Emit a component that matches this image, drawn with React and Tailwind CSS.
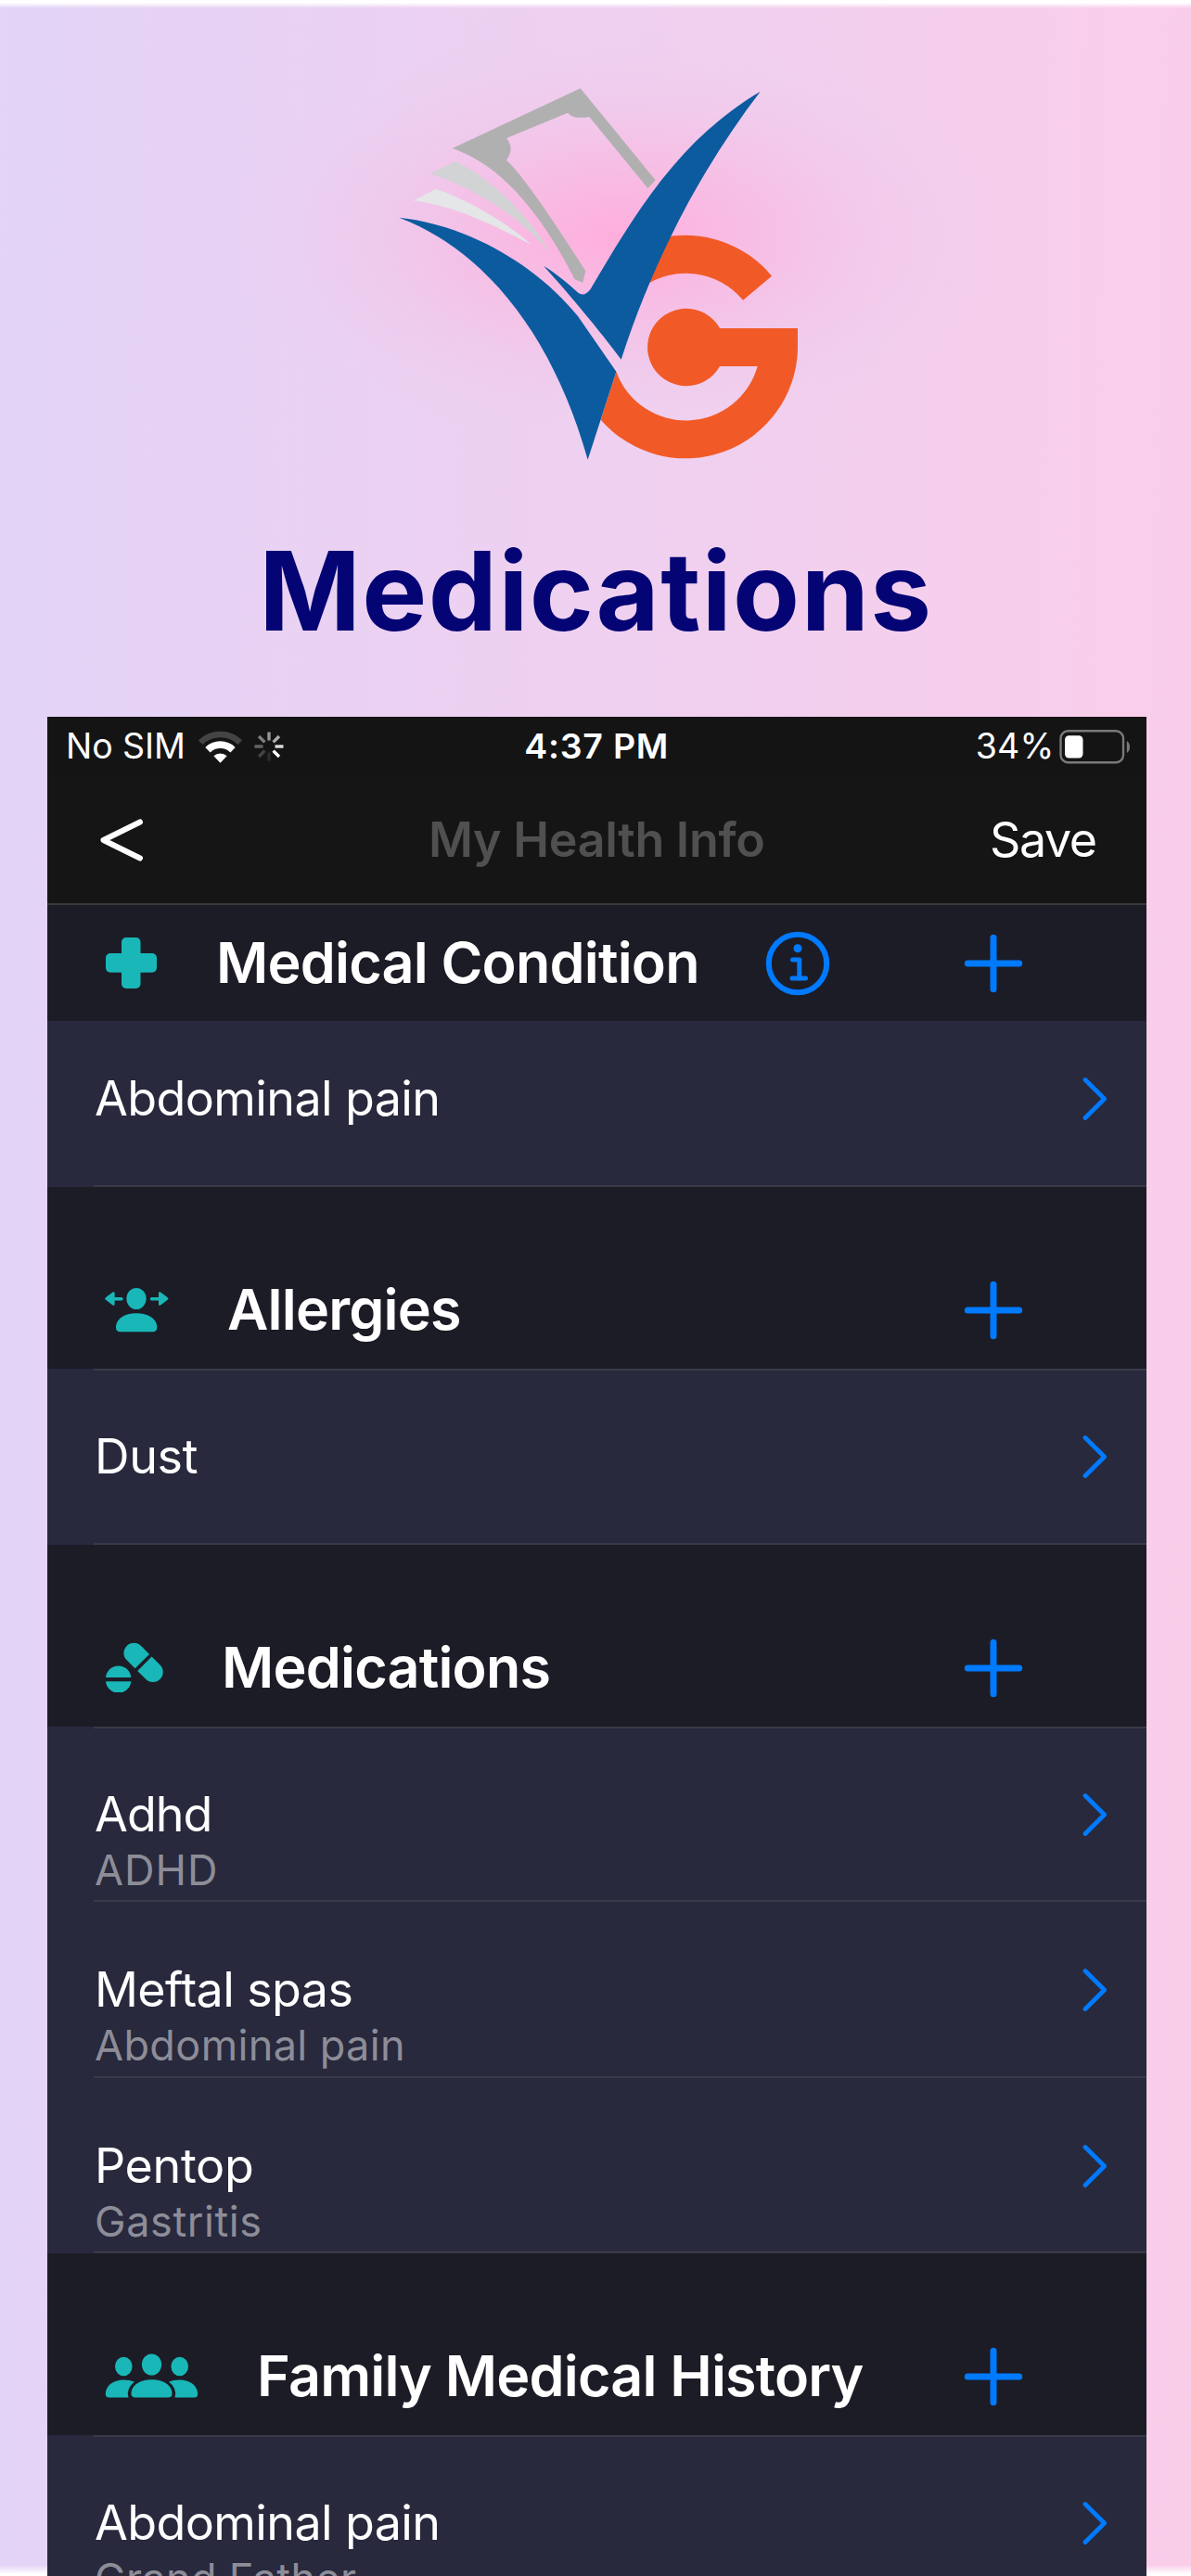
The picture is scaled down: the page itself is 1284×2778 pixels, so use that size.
import React from 'react';

const Logo = () => (
    <svg viewBox="0 0 1500 1350" className="ml-4 w-[500px] h-[450px] shrink-0">
        {/* Book cover and pages */}
        <path fill="#b0b0b0" d="M263 270 L677 76 L920 373 L895 399 L706 168 Q655 177 636 155 L438 237 Q466 272 437 308 Q495 355 694 667 L685 704 L659 694 C540 460 410 320 263 270Z" />
        <path fill="#d1d3d4" d="M191 352 L274 312 C400 375 520 500 578 607 C480 490 340 400 191 352Z" />
        <path fill="#e4e6e8" d="M137 439 L210 401 C320 440 440 510 519 582 C400 520 270 455 137 439Z" />
        {/* G */}
        <g fill="#f15a26">
            <path d="M940 559 A363 363 0 0 1 1296 683 L1203 761 A240 240 0 0 0 880 718Z" />
            <path d="M1128 852 H1380 V920 A363 363 0 0 1 743 1148 L793 992 A240 240 0 0 0 1250 975 H1128 A125 125 0 1 1 1128 852Z" />
        </g>
        {/* Check mark */}
        <g fill="#0c5b9f">
            <path d="M91 494 C300 515 530 640 669 813 L793 992 L701 1277 C590 880 371 600 91 494Z" />
            <path d="M558 650 C600 675 640 710 670 737 Q690 752 710 725 C860 470 1000 240 1259 86 C1080 320 920 610 809 953 C740 860 640 740 558 650Z" />
        </g>
    </svg>
);

const WifiIcon = () => (
    <svg viewBox="0 0 140 105" className="w-[47px] h-[35px]" fill="none">
        <path d="M6 38 A92 92 0 0 1 134 38" stroke="#444444" strokeWidth="20" />
        <path d="M29.4 62 A58.5 58.5 0 0 1 110.6 62" stroke="#ffffff" strokeWidth="23" />
        <path d="M70 104 L48.5 82 A31 31 0 0 1 91.5 82Z" fill="#ffffff" />
    </svg>
);

const spokes = [0.55, 0.65, 0.85, 1, 0.1, 0.2, 0.35, 0.45];

const Spinner = () => (
    <svg viewBox="-16 -16 32 32" className="w-8 h-8">
        {spokes.map((opacity, i) => (
            <path key={i} d="M0 -6.5V-15.5" stroke="#ffffff" strokeWidth="3.4" opacity={opacity} transform={`rotate(${i * 45})`} />
        ))}
    </svg>
);

const BatteryIcon = () => (
    <svg viewBox="0 0 76 37" className="w-[76px] h-[37px]" fill="none">
        <rect x="1.5" y="1.3" width="67.5" height="34" rx="8" stroke="#7a7a7a" strokeWidth="2.4" />
        <rect x="6" y="6.2" width="19.5" height="24.4" rx="4.5" fill="#ffffff" />
        <path d="M72.8 12 Q76 14 76 18.5 T72.8 25Z" fill="#7a7a7a" />
    </svg>
);

const ConditionIcon = () => (
    <svg viewBox="0 0 57 57" className="w-[57px] h-[57px]" fill="#19b7b7">
        <rect x="18" y="1" width="20.5" height="55" rx="5" />
        <rect x="1" y="18" width="55" height="20.7" rx="5" />
    </svg>
);

const AllergyIcon = () => (
    <svg viewBox="0 0 69 48" className="w-[69px] h-12" fill="#19b7b7">
        <ellipse cx="34" cy="11.5" rx="10.6" ry="11.5" />
        <path d="M12 42.5 C12 33 22 27.3 34 27.3 S56.3 33 56.3 42.5 Q56.3 47.3 51.5 47.3 H17 Q12 47.3 12 42.5Z" />
        <path d="M0 11.5 Q0 10.6 9 4.3 Q10.6 4 10.6 5.6 V10 H18 Q19.7 10 19.7 11.7 T18 13.4 H10.6 V17.6 Q10.6 19.2 9 18.8 Q0 12.4 0 11.5Z" />
        <path d="M68.6 11.5 Q68.6 10.6 59.6 4.3 Q58 4 58 5.6 V10 H50.5 Q48.8 10 48.8 11.7 T50.5 13.4 H58 V17.6 Q58 19.2 59.6 18.8 Q68.6 12.4 68.6 11.5Z" />
    </svg>
);

const PillsIcon = () => (
    <svg viewBox="0 0 63 54" className="-mt-[2px] w-[63px] h-[54px]" fill="#19b7b7">
        <path d="M1 38 A13.7 13.7 0 0 1 28.3 38Z" />
        <path d="M1 42.2 A13.7 13.7 0 0 0 28.3 42.2Z" />
        <g transform="translate(41.6 21.9) rotate(45)">
            <path d="M-1.8 -10.9 V10.9 H-14.5 A10.9 10.9 0 0 1 -14.5 -10.9Z" />
            <path d="M1.8 -10.9 V10.9 H14.5 A10.9 10.9 0 0 0 14.5 -10.9Z" />
        </g>
    </svg>
);

const FamilyIcon = () => (
    <svg viewBox="0 0 101 48" className="-mt-[2px] w-[101px] h-12" fill="#19b7b7">
        <ellipse cx="20.3" cy="14" rx="9.3" ry="10.3" />
        <ellipse cx="80.7" cy="14" rx="9.3" ry="10.3" />
        <ellipse cx="50.5" cy="12" rx="10.6" ry="11.6" />
        <path d="M28.5 43.5 C28.5 34 38.5 28.3 50.5 28.3 S72.5 34 72.5 43.5 Q72.5 47.6 68 47.6 H33 Q28.5 47.6 28.5 43.5Z" />
        <path d="M32 30.6 Q27 28.4 20.3 28.4 C9 28.4 .8 35 .8 43.5 Q.8 47.6 4.5 47.6 H25.5 Q22.5 38 32 30.6Z" />
        <path d="M69 30.6 Q74 28.4 80.7 28.4 C92 28.4 100.2 35 100.2 43.5 Q100.2 47.6 96.5 47.6 H75.5 Q78.5 38 69 30.6Z" />
    </svg>
);

const InfoIcon = () => (
    <svg viewBox="-35 -35 70 70" className="ml-[8px] w-[70px] h-[70px]" fill="none" stroke="#007aff" strokeLinecap="round" strokeLinejoin="round">
        <circle r="31.2" strokeWidth="6" />
        <circle cy="-16.3" r="4.5" fill="#007aff" stroke="none" />
        <path d="M-5.5 -4 H1.8 V16" strokeWidth="5" />
        <path d="M-6 16 H8.5" strokeWidth="5" />
    </svg>
);

const PlusIcon = () => (
    <svg viewBox="-32 -32 64 64" className="ml-auto mr-[133px] w-16 h-16" stroke="#007aff" strokeWidth="7" strokeLinecap="round">
        <path d="M-27.7 0H27.7M0 -27.7V27.7" />
    </svg>
);

const Chevron = () => (
    <svg viewBox="0 0 28 48" className="ml-auto mr-[41px] w-7 h-12" fill="none" stroke="#007aff" strokeWidth="4.8" strokeLinecap="round" strokeLinejoin="round">
        <path d="M3 3.5 L23.6 24 L3 44.5" />
    </svg>
);

const sections = [
    {
        title: 'Medical Condition',
        icon: ConditionIcon,
        info: true,
        header: 'h-[125px]',
        row: 'h-[179px] pt-[54px]',
        items: [{ name: 'Abdominal pain' }],
    },
    {
        title: 'Allergies',
        icon: AllergyIcon,
        items: [{ name: 'Dust', tracking: 'tracking-[-0.4px]' }],
    },
    {
        title: 'Medications',
        icon: PillsIcon,
        items: [
            { name: 'Adhd', tracking: 'tracking-[-1px]', detail: 'ADHD', detailTracking: 'tracking-[1px]' },
            { name: 'Meftal spas', detail: 'Abdominal pain' },
            { name: 'Pentop', tracking: 'tracking-[-0.35px]', detail: 'Gastritis', detailTracking: 'tracking-[0.6px]' },
        ],
    },
    {
        title: 'Family Medical History',
        icon: FamilyIcon,
        items: [{ name: 'Abdominal pain', detail: 'Grand Father' }],
    },
];

const Row = ({ item, size, divider }) => (
    <div className="bg-[#28293d] pl-[50px]">
        <div className={`border-b-2 border-[#393a47] pl-px ${size} ${divider}`}>
            <div className="flex items-center h-[60px]">
                <span className={`text-[52px] leading-[60px] text-white ${item.tracking || 'tracking-[-0.6px]'}`}>{item.name}</span>
                <Chevron />
            </div>
            {item.detail && (
                <p className={`mt-[3px] text-[45px] leading-[54px] text-[#8d8d98] ${item.detailTracking || 'tracking-[0.38px]'}`}>
                    {item.detail}
                </p>
            )}
        </div>
    </div>
);

const Section = ({ section }) => {
    const Icon = section.icon;

    return (
        <section>
            <div className={`flex items-center gap-[63px] pl-[62px] ${section.header || 'h-[196px] pt-[70px]'}`}>
                <Icon />
                <h2 className="-mt-[2px] text-[61px] leading-[70px] font-semibold tracking-[-0.8px] text-white whitespace-nowrap">
                    {section.title}
                </h2>
                {section.info && <InfoIcon />}
                <PlusIcon />
            </div>
            {section.items.map((item, i) => (
                <Row
                    key={item.name}
                    item={item}
                    size={section.row || (i === 0 ? 'h-[189.5px] pt-[63px]' : 'h-[189.5px] pt-[65px]')}
                    divider={i === 0 && !section.row ? 'border-t-2' : ''}
                />
            ))}
        </section>
    );
};

const App = () => (
    <div className="w-[1284px] h-[2778px] overflow-hidden font-[Inter,sans-serif] bg-[linear-gradient(to_bottom,#ffffff_0px,#ffffff_3px,transparent_9px,transparent_2766px,#ffffff_2776px),radial-gradient(ellipse_420px_225px_at_665px_255px,rgba(255,172,219,0.95)_0%,rgba(251,180,223,0.68)_32%,rgba(242,194,231,0.44)_62%,rgba(238,206,238,0.25)_85%,rgba(238,206,238,0)_100%),linear-gradient(91deg,#e3d4f8_0%,#e5d3f6_9%,#ecd1f2_35%,#f3cfee_68%,#f9ceea_94%,#facde9_100%)]">
        <header className="flex flex-col items-center h-[773px] pt-[70px]">
            <Logo />
            <h1 className="mt-[57px] pl-px text-[117.6px] leading-[120px] font-bold tracking-[1.45px] text-[#040474]">Medications</h1>
        </header>

        <main className="ml-[51px] w-[1184.5px] bg-[#1c1c27]">
            <div className="grid grid-cols-[1fr_auto_1fr] items-center h-16 bg-[#141414] pl-5 pr-[18px] text-[37.5px] leading-[48px] text-white">
                <div className="flex items-center">
                    <span className="tracking-[-0.1px]">No SIM</span>
                    <span className="ml-[14px]"><WifiIcon /></span>
                    <span className="ml-[13px]"><Spinner /></span>
                </div>
                <span className="font-semibold tracking-[0.74px] -ml-[2px]">4:37 PM</span>
                <div className="flex items-center justify-end gap-[5px]">
                    <span className="tracking-[0.2px]">34%</span>
                    <BatteryIcon />
                </div>
            </div>

            <nav className="grid grid-cols-[1fr_auto_1fr] items-center h-[139px] border-b-2 border-[#38383b] bg-[#151515] pl-[54px] pr-[54px] text-[52px] leading-[60px]">
                <svg viewBox="0 0 52 48" className="w-[52px] h-12" fill="none" stroke="#ffffff" strokeWidth="6" strokeLinecap="round" strokeLinejoin="round">
                    <path d="M46 4.5 L6.5 24 L46 43.5" />
                </svg>
                <span className="font-semibold tracking-[-0.28px] text-[#505050]">My Health Info</span>
                <span className="text-right tracking-[-1.47px] text-white">Save</span>
            </nav>

            {sections.map((section) => (
                <Section key={section.title} section={section} />
            ))}
        </main>
    </div>
);

export default App;
